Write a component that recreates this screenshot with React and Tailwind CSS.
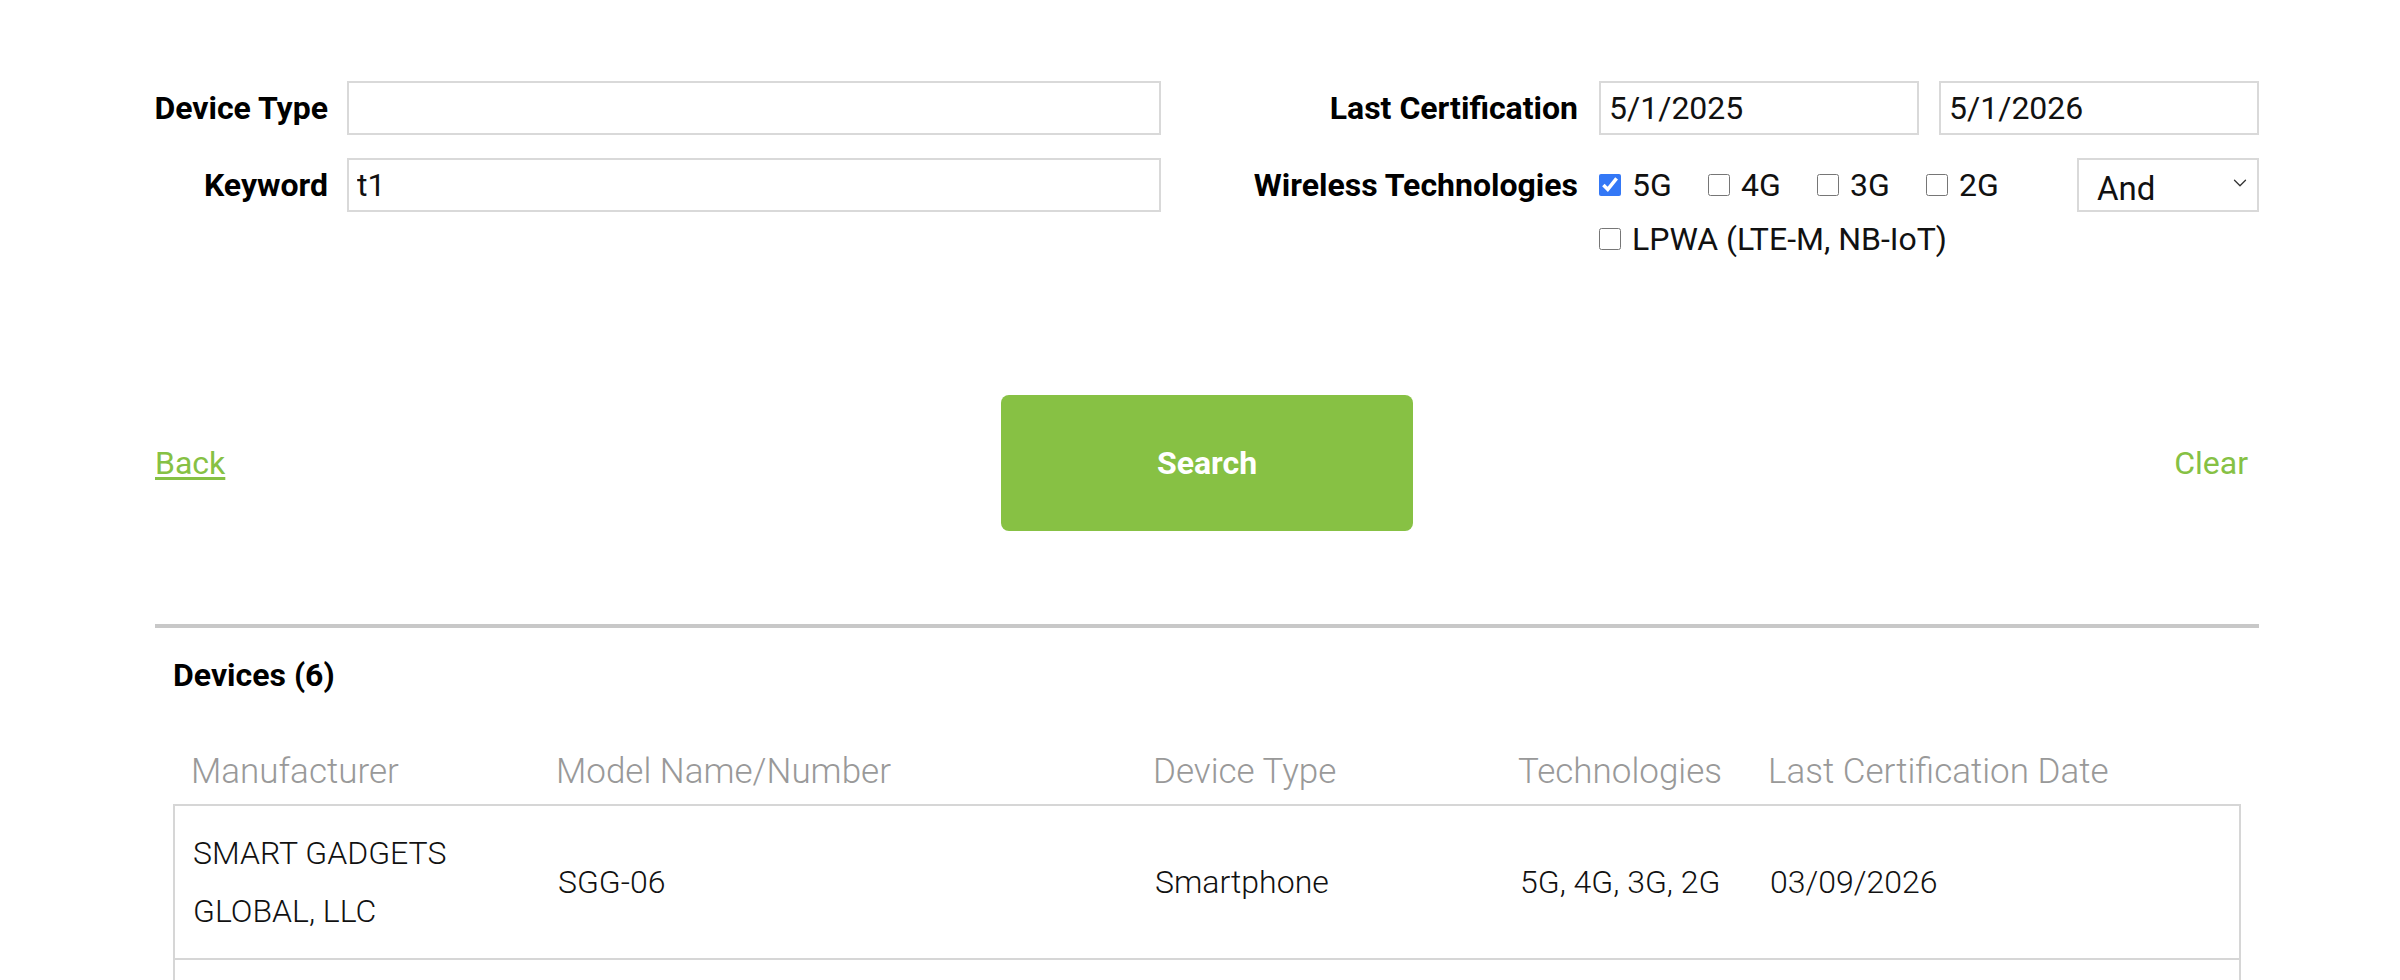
import { useState } from "react";
import { ChevronDown } from "lucide-react";

const techs = ["5G", "4G", "3G", "2G", "LPWA (LTE-M, NB-IoT)"];

const devices = [
  {
    manufacturer: "SMART GADGETS GLOBAL, LLC",
    model: "SGG-06",
    type: "Smartphone",
    tech: "5G, 4G, 3G, 2G",
    date: "03/09/2026",
  },
  {
    manufacturer: "SMART GADGETS GLOBAL, LLC",
    model: "SGG-05",
    type: "Smartphone",
    tech: "5G, 4G, 3G, 2G",
    date: "01/14/2026",
  },
];

const inputCls =
  "h-[54px] w-full border-2 border-[#d9d9d9] bg-white px-[8px] text-[32px] text-[#111] outline-none";

function Label({ children }) {
  return (
    <div className="flex h-[54px] items-center justify-end whitespace-nowrap text-[32px] font-bold text-black">
      {children}
    </div>
  );
}

export default function App() {
  const [deviceType, setDeviceType] = useState("");
  const [keyword, setKeyword] = useState("t1");
  const [from, setFrom] = useState("5/1/2025");
  const [to, setTo] = useState("5/1/2026");
  const [checked, setChecked] = useState({ "5G": true });
  const [mode, setMode] = useState("And");

  const toggle = (t) => setChecked((c) => ({ ...c, [t]: !c[t] }));

  return (
    <div className="min-h-screen bg-white font-['Roboto',sans-serif] text-[#111]">
      <div className="ml-[155px] w-[2104px] pt-[81px]">
        {/* filters */}
        <div className="flex items-start justify-between">
          <div className="grid grid-cols-[173px_814px] gap-x-[19px] gap-y-[23px]">
            <Label>Device Type</Label>
            <input
              className={inputCls}
              value={deviceType}
              onChange={(e) => setDeviceType(e.target.value)}
            />
            <Label>Keyword</Label>
            <input
              className={inputCls}
              value={keyword}
              onChange={(e) => setKeyword(e.target.value)}
            />
          </div>

          <div className="grid grid-cols-[325px_660px] gap-x-[21px] gap-y-[23px]">
            <Label>Last Certification</Label>
            <div className="flex gap-[20px]">
              <input className={inputCls} value={from} onChange={(e) => setFrom(e.target.value)} />
              <input className={inputCls} value={to} onChange={(e) => setTo(e.target.value)} />
            </div>
            <Label>Wireless Technologies</Label>
            <div className="flex items-start gap-[20px]">
              <div className="flex flex-1 flex-wrap">
                {techs.map((t) => (
                  <label
                    key={t}
                    className={
                      t.length > 2
                        ? "flex h-[54px] items-center gap-[11px] text-[32px]"
                        : "flex h-[54px] w-[109px] items-center gap-[11px] text-[32px]"
                    }
                  >
                    <input
                      type="checkbox"
                      checked={!!checked[t]}
                      onChange={() => toggle(t)}
                      className="m-0 h-[22px] w-[22px] accent-[#3478f6]"
                    />
                    {t}
                  </label>
                ))}
              </div>
              <div className="relative w-[182px] shrink-0">
                <select
                  value={mode}
                  onChange={(e) => setMode(e.target.value)}
                  className="h-[54px] w-full appearance-none border-2 border-[#d9d9d9] bg-white pl-[18px] pt-[4px] text-[33px] text-[#111] outline-none"
                >
                  <option>And</option>
                  <option>Or</option>
                </select>
                <ChevronDown
                  className="pointer-events-none absolute right-[8px] top-[14px] h-[22px] w-[22px] text-[#333]"
                  strokeWidth={1.4}
                />
              </div>
            </div>
          </div>
        </div>

        {/* actions */}
        <div className="mt-[129px] grid grid-cols-[1fr_auto_1fr] items-center">
          <a href="#" className="justify-self-start text-[32px] text-[#86c144] underline underline-offset-[3px]">
            Back
          </a>
          <button className="h-[136px] w-[412px] rounded-[8px] bg-[#87c144] text-[32px] font-bold text-white">
            Search
          </button>
          <button className="mr-[11px] justify-self-end text-[32px] text-[#86c144]">Clear</button>
        </div>

        <div className="mt-[93px] h-[4px] bg-[#c8c8c8]" />

        {/* results */}
        <div className="px-[18px]">
          <h2 className="mt-[27px] text-[32px] font-bold leading-[40px] text-black">
            Devices ({6})
          </h2>

          <div className="mt-[45px] grid h-[64px] grid-cols-[365px_597px_365px_250px_1fr] items-center text-[35px] font-light text-[#999]">
            <div className="px-[18px]">Manufacturer</div>
            <div className="px-[18px]">Model Name/Number</div>
            <div className="px-[18px]">Device Type</div>
            <div className="px-[18px]">Technologies</div>
            <div className="px-[18px]">Last Certification Date</div>
          </div>

          <div className="border-2 border-b-0 border-[#d6d6d6]">
            {devices.map((d) => (
              <div
                key={d.model}
                className="grid grid-cols-[365px_597px_365px_250px_1fr] items-center border-b-2 border-[#d6d6d6] py-[18px] text-[32px] font-light leading-[58px] text-[#111]"
              >
                <div className="px-[18px]">{d.manufacturer}</div>
                <div className="px-[18px]">{d.model}</div>
                <div className="px-[18px]">{d.type}</div>
                <div className="px-[18px]">{d.tech}</div>
                <div className="px-[18px]">{d.date}</div>
              </div>
            ))}
          </div>
        </div>
      </div>
    </div>
  );
}
